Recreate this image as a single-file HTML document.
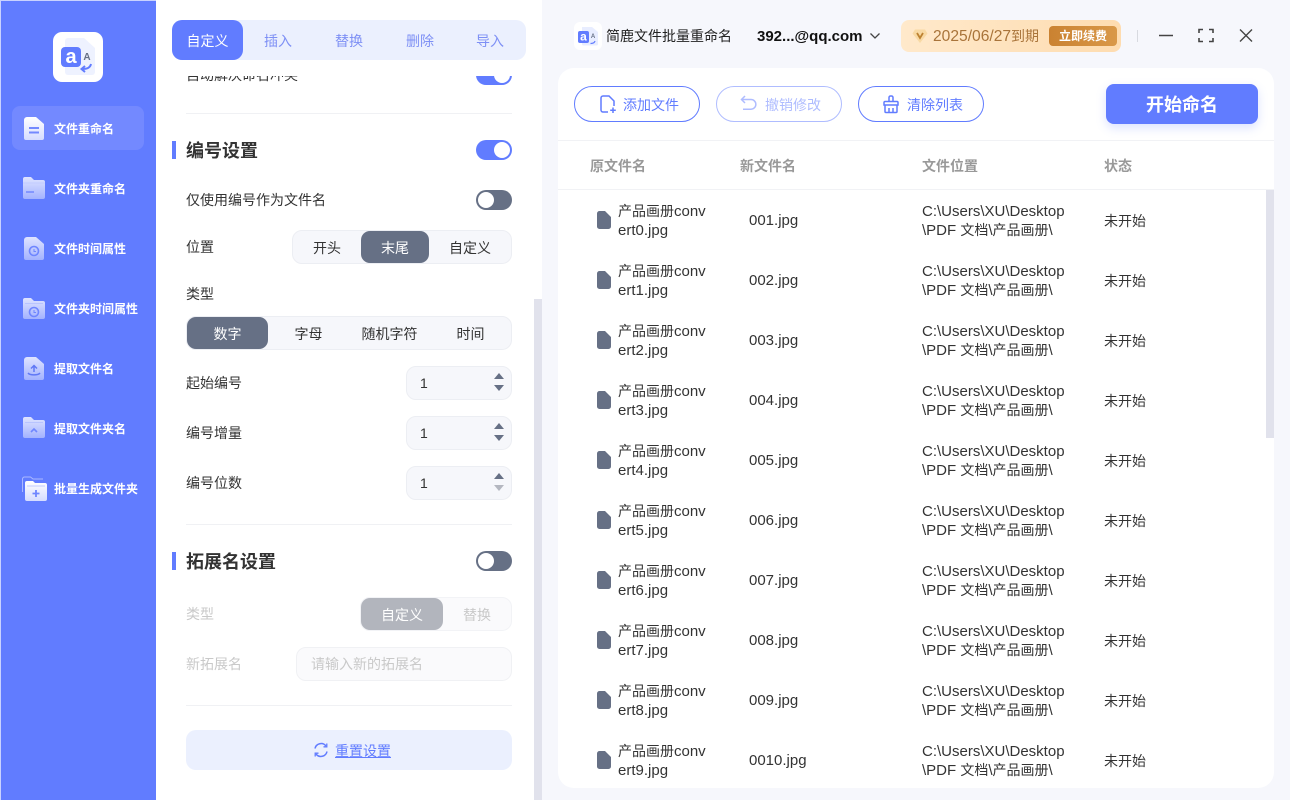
<!DOCTYPE html>
<html lang="zh"><head><meta charset="utf-8"><title>简鹿文件批量重命名</title>
<style>
*{box-sizing:border-box}
html,body{margin:0;padding:0}
body{width:1290px;height:800px;position:relative;overflow:hidden;background:#f6f7fc;font-family:"Liberation Sans","Noto Sans CJK SC",sans-serif;font-size:14px;color:#333}
.a{position:absolute}
.t{position:absolute;white-space:nowrap;line-height:20px}
svg{position:absolute;display:block}
.nav{position:absolute;left:54px;color:#fff;font-size:12px;font-weight:700;line-height:20px;white-space:nowrap}
.tog{position:absolute;width:36px;height:20px;border-radius:10px;background:#667085}
.tog i{position:absolute;top:2px;left:2px;width:16px;height:16px;border-radius:50%;background:#fff}
.tog.on{background:#617cff}.tog.on i{left:18px}
.seg{position:absolute;height:34px;border:1px solid #eceef3;border-radius:10px;background:#f6f7fb}
.sel{position:absolute;background:#667085;border-radius:9px;color:#fff;text-align:center;line-height:34px;height:32px;top:0}
.opt{position:absolute;top:0;text-align:center;line-height:34px;height:32px;color:#333;font-size:14px}
.spin{position:absolute;left:406px;width:106px;height:34px;border:1px solid #eceef3;border-radius:10px;background:#f6f7fb;line-height:32px;padding-left:13px;font-size:14px}
.spin b,.spin u{position:absolute;left:87px;width:0;height:0;border-left:5px solid transparent;border-right:5px solid transparent}
.spin b{top:6px;border-bottom:6px solid #667085}
.spin u{top:18px;border-top:6px solid #667085}
.hr{position:absolute;left:186px;width:326px;height:1px;background:#f0f1f4}
.btn{position:absolute;top:86px;height:36px;width:126px;border:1px solid #617cff;border-radius:18px;color:#617cff;line-height:36px;padding-left:48px}
.hd{position:absolute;top:156px;color:#999;font-weight:700;font-size:14px;line-height:20px}
.c{position:absolute;font-size:14px;line-height:19px;color:#333;white-space:nowrap}
.c span{font-size:15px}
</style></head><body>

<!-- sidebar -->
<div class="a" style="left:0;top:0;width:156px;height:800px;background:#617cff;border-left:1px solid #c9d2ff;border-top:1px solid #c9d2ff"></div>
<div class="a" style="left:53px;top:32px;width:50px;height:50px;border-radius:9px;background:#fff"></div>
<svg style="left:53px;top:32px" width="50" height="50" viewBox="0 0 50 50"><path d="M12 9a3 3 0 0 1 3-3h16l11 10v24a3 3 0 0 1-3 3H15a3 3 0 0 1-3-3z" fill="#eef2ff"/><rect x="8" y="15" width="20" height="20" rx="4" fill="#617cff"/><text x="18" y="31" font-size="20" font-weight="700" fill="#fff" text-anchor="middle" font-family="Liberation Sans">a</text><text x="34" y="28" font-size="10" font-weight="700" fill="#667085" text-anchor="middle" font-family="Liberation Sans">A</text><path d="M38 32c-1 4-4 5-9 5m3-3-3.500 3 3.500 3" fill="none" stroke="#617cff" stroke-width="2"/></svg>
<div class="a" style="left:12px;top:106px;width:132px;height:44px;border-radius:8px;background:#7389ff"></div>

<svg style="left:24px;top:117px" width="20" height="23" viewBox="0 0 20 23"><defs><linearGradient id="w" x1="0" y1="0" x2="0" y2="1"><stop offset="0" stop-color="#fff"/><stop offset="1" stop-color="#d5dcff"/></linearGradient><linearGradient id="p" x1="0" y1="0" x2="0" y2="1"><stop offset="0" stop-color="#dfe4ff"/><stop offset="1" stop-color="#a3b2ff"/></linearGradient></defs><path d="M0 3a3 3 0 0 1 3-3h9l8 7v14a2 2 0 0 1-2 2H2a2 2 0 0 1-2-2z" fill="url(#w)"/><path d="M5 11h10M5 15.500h10" stroke="#7389ff" stroke-width="2"/></svg>
<div class="nav" style="top:119px">文件重命名</div>

<svg style="left:23px;top:177px" width="22" height="22" viewBox="0 0 22 22"><path d="M0 2a2 2 0 0 1 2-2h6l3 3h9a2 2 0 0 1 2 2v15a2 2 0 0 1-2 2H2a2 2 0 0 1-2-2z" fill="url(#p)"/><path d="M0 6h22" stroke="#c2ccff"/><path d="M3 15h8" stroke="#7389ff" stroke-width="1.500"/></svg>
<div class="nav" style="top:179px">文件夹重命名</div>

<svg style="left:24px;top:237px" width="20" height="23" viewBox="0 0 20 23"><path d="M0 3a3 3 0 0 1 3-3h9l8 7v14a2 2 0 0 1-2 2H2a2 2 0 0 1-2-2z" fill="url(#p)"/><circle cx="10" cy="14" r="4.500" fill="none" stroke="#6f86ff" stroke-width="1.600"/><path d="M10 12v2.500h2" fill="none" stroke="#6f86ff"/></svg>
<div class="nav" style="top:239px">文件时间属性</div>

<svg style="left:23px;top:298px" width="22" height="21" viewBox="0 0 22 21"><path d="M0 2a2 2 0 0 1 2-2h6l3 3h9a2 2 0 0 1 2 2v14a2 2 0 0 1-2 2H2a2 2 0 0 1-2-2z" fill="url(#p)"/><path d="M2 5.500h18" stroke="#b8c4ff"/><circle cx="11" cy="14" r="4.500" fill="none" stroke="#6f86ff" stroke-width="1.600"/><path d="M11 12v2.500h2" fill="none" stroke="#6f86ff"/></svg>
<div class="nav" style="top:299px">文件夹时间属性</div>

<svg style="left:24px;top:357px" width="20" height="23" viewBox="0 0 20 23"><path d="M0 3a3 3 0 0 1 3-3h9l8 7v14a2 2 0 0 1-2 2H2a2 2 0 0 1-2-2z" fill="url(#p)"/><path d="M10 15V9M7 11.500l3-3 3 3M4 16c2 2.500 10 2.500 12 0" fill="none" stroke="#6078f5" stroke-width="1.500"/></svg>
<div class="nav" style="top:359px">提取文件名</div>

<svg style="left:23px;top:417px" width="22" height="21" viewBox="0 0 22 21"><path d="M0 2a2 2 0 0 1 2-2h6l3 3h9a2 2 0 0 1 2 2v14a2 2 0 0 1-2 2H2a2 2 0 0 1-2-2z" fill="url(#p)"/><path d="M2 5.500h18" stroke="#b8c4ff"/><path d="M8 15l3-3 3 3" fill="none" stroke="#6f86ff" stroke-width="1.600"/></svg>
<div class="nav" style="top:419px">提取文件夹名</div>

<svg style="left:22px;top:476px" width="26" height="26" viewBox="0 0 26 26"><path d="M.5 16V3a2 2 0 0 1 2-2h6l2.500 2h10" fill="none" stroke="#aab8ff"/><path d="M3 7a2 2 0 0 1 2-2h6l2 2h10a2 2 0 0 1 2 2v14a2 2 0 0 1-2 2H5a2 2 0 0 1-2-2z" fill="url(#w)"/><path d="M5 10h18" stroke="#c2ccff"/><path d="M14 14v7M10.500 17.500h7" stroke="#6f86ff" stroke-width="1.800"/></svg>
<div class="nav" style="top:479px">批量生成文件夹</div>

<!-- settings panel -->
<div class="a" style="left:156px;top:0;width:386px;height:800px;background:#fff"></div>
<div class="a" style="left:534px;top:299px;width:8px;height:501px;background:#e1e2ec"></div>

<div class="t" style="left:186px;top:65px;height:20px;font-size:14px;color:#333">自动解决命名冲突</div>
<div class="tog on" style="left:476px;top:65px"><i></i></div>

<div class="a" style="left:156px;top:0;width:378px;height:76px;background:#fff"></div>
<div class="a" style="left:172px;top:20px;width:354px;height:40px;border-radius:10px;background:#ebf0fe"></div>
<div class="a" style="left:172px;top:20px;width:71px;height:40px;border-radius:10px;background:#617cff;color:#fff;text-align:center;line-height:43px;font-size:14px">自定义</div>
<div class="t" style="left:264px;top:31px;color:#7e90f5">插入</div>
<div class="t" style="left:335px;top:31px;color:#7e90f5">替换</div>
<div class="t" style="left:406px;top:31px;color:#7e90f5">删除</div>
<div class="t" style="left:476px;top:31px;color:#7e90f5">导入</div>

<div class="hr" style="top:113px"></div>
<div class="a" style="left:172px;top:141px;width:4px;height:18px;background:#617cff"></div>
<div class="t" style="left:186px;top:140px;font-size:18px;font-weight:700;line-height:22px">编号设置</div>
<div class="tog on" style="left:476px;top:140px"><i></i></div>

<div class="t" style="left:186px;top:190px">仅使用编号作为文件名</div>
<div class="tog" style="left:476px;top:190px"><i></i></div>

<div class="t" style="left:186px;top:237px">位置</div>
<div class="seg" style="left:292px;top:230px;width:220px">
  <div class="opt" style="left:0;width:68px">开头</div>
  <div class="sel" style="left:68px;width:68px">末尾</div>
  <div class="opt" style="left:136px;width:82px">自定义</div>
</div>

<div class="t" style="left:186px;top:284px">类型</div>
<div class="seg" style="left:186px;top:316px;width:326px">
  <div class="sel" style="left:0;width:81px">数字</div>
  <div class="opt" style="left:81px;width:81px">字母</div>
  <div class="opt" style="left:162px;width:81px">随机字符</div>
  <div class="opt" style="left:243px;width:81px">时间</div>
</div>

<div class="t" style="left:186px;top:373px">起始编号</div>
<div class="spin" style="top:366px">1<b></b><u></u></div>
<div class="t" style="left:186px;top:423px">编号增量</div>
<div class="spin" style="top:416px">1<b></b><u></u></div>
<div class="t" style="left:186px;top:473px">编号位数</div>
<div class="spin" style="top:466px">1<b></b><u style="border-top-color:#b4b7c0"></u></div>

<div class="hr" style="top:524px"></div>
<div class="a" style="left:172px;top:552px;width:4px;height:18px;background:#617cff"></div>
<div class="t" style="left:186px;top:551px;font-size:18px;font-weight:700;line-height:22px">拓展名设置</div>
<div class="tog" style="left:476px;top:551px"><i></i></div>

<div class="t" style="left:186px;top:604px;color:#c9c9c9">类型</div>
<div class="seg" style="left:360px;top:597px;width:152px;background:#fafafc;border-color:#f2f3f6">
  <div class="sel" style="left:0;width:82px;background:#b2b5bd">自定义</div>
  <div class="opt" style="left:82px;width:68px;color:#c9c9c9">替换</div>
</div>
<div class="t" style="left:186px;top:654px;color:#c9c9c9">新拓展名</div>
<div class="a" style="left:296px;top:647px;width:216px;height:34px;border:1px solid #f0f1f4;border-radius:10px;background:#fafafc;line-height:32px;padding-left:14px;color:#c9c9c9">请输入新的拓展名</div>

<div class="hr" style="top:705px"></div>
<div class="a" style="left:186px;top:730px;width:326px;height:40px;border-radius:10px;background:#ebf0fe"></div>
<svg style="left:313px;top:742px" width="16" height="16" viewBox="0 0 16 16"><path d="M2 6.500A6.200 6.200 0 0 1 13 4M14 9.500A6.200 6.200 0 0 1 3 12" fill="none" stroke="#617cff" stroke-width="1.500"/><path d="M13.800 1.500v3.300h-3.300M2.200 14.500v-3.300h3.300" fill="none" stroke="#617cff" stroke-width="1.300"/></svg>
<div class="t" style="left:335px;top:741px;color:#617cff;text-decoration:underline">重置设置</div>

<!-- title bar -->
<div class="a" style="left:574px;top:22px;width:28px;height:28px;border-radius:6px;background:#fff"></div>
<svg style="left:574px;top:22px" width="28" height="28" viewBox="0 0 28 28"><path d="M8 5h10l6 5v12a1.500 1.500 0 0 1-1.500 1.500h-13A1.500 1.500 0 0 1 8 22z" fill="#e8edff"/><rect x="4" y="9" width="11" height="12" rx="2" fill="#617cff"/><text x="9.500" y="18.500" font-size="12" font-weight="700" fill="#fff" text-anchor="middle" font-family="Liberation Sans">a</text><text x="19" y="16" font-size="6" font-weight="700" fill="#667085" text-anchor="middle" font-family="Liberation Sans">A</text><path d="M21 19c-.5 2-2 2.500-4.500 2.500" fill="none" stroke="#617cff" stroke-width="1.200"/></svg>
<div class="t" style="left:606px;top:26px;color:#222;font-size:14px">简鹿文件批量重命名</div>
<div class="t" style="left:757px;top:26.500px;color:#111;font-weight:700;font-size:15px">392...@qq.com</div>
<svg style="left:869px;top:31px" width="12" height="10" viewBox="0 0 12 10"><path d="M1.500 2.500L6 7l4.500-4.500" fill="none" stroke="#444" stroke-width="1.300"/></svg>

<div class="a" style="left:901px;top:20px;width:220px;height:32px;border-radius:8px;background:linear-gradient(90deg,#ffe9cb,#fedcb0)"></div>
<svg style="left:912px;top:28px" width="16" height="16" viewBox="0 0 16 16"><path d="M3 1.500h10l2.500 4L8 15 .5 5.500z" fill="#f8d9a4"/><path d="M5 5l3 5 3-5" fill="none" stroke="#bd8232" stroke-width="1.800"/></svg>
<div class="t" style="left:933px;top:26px;color:#a9743a;font-size:14px"><span style="font-size:15.600px">2025/06/27</span>到期</div>
<div class="a" style="left:1049px;top:26px;width:68px;height:20px;border-radius:4px;background:linear-gradient(90deg,#ca8231,#d99848);color:#fff;font-size:12px;font-weight:700;line-height:21px;text-align:center">立即续费</div>
<div class="a" style="left:1137px;top:30px;width:1px;height:12px;background:#d8dae0"></div>
<svg style="left:1158px;top:27px" width="100" height="18" viewBox="0 0 100 18"><path d="M1 8.500h14" stroke="#444" stroke-width="1.500"/><path d="M41 6V2.500h4M51 2.500h4V6M55 11v3.500h-4M45 14.500h-4V11" fill="none" stroke="#444" stroke-width="1.600"/><path d="M82 2.500l12 12M94 2.500l-12 12" stroke="#444" stroke-width="1.400"/></svg>

<!-- card -->
<div class="a" style="left:558px;top:68px;width:716px;height:720px;border-radius:16px;background:#fff"></div>

<div class="btn" style="left:574px">添加文件</div>
<svg style="left:599px;top:95px" width="18" height="19" viewBox="0 0 18 19"><path d="M9 17H4a2 2 0 0 1-2-2V3a2 2 0 0 1 2-2h6l5 5v5" fill="none" stroke="#617cff" stroke-width="1.500"/><path d="M14 12.500v5.500M11.200 15.300h5.600" stroke="#617cff" stroke-width="1.500"/></svg>
<div class="btn" style="left:716px;opacity:.5">撤销修改</div>
<svg style="left:740px;top:95px;opacity:.5" width="18" height="18" viewBox="0 0 18 18"><path d="M5 1L1.500 4.500 5 8M2 4.500h9a4.800 4.800 0 0 1 0 9.700H3" fill="none" stroke="#617cff" stroke-width="1.500"/></svg>
<div class="btn" style="left:858px;color:#617cff">清除列表</div>
<svg style="left:882px;top:95px" width="18" height="19" viewBox="0 0 18 19"><path d="M7 6V2.500a1.500 1.500 0 0 1 1.500-1.500h1A1.500 1.500 0 0 1 11 2.500V6M3 6.500h12a1 1 0 0 1 1 1V10H2V7.500a1 1 0 0 1 1-1zM3 10v6.500a1 1 0 0 0 1 1h10a1 1 0 0 0 1-1V10M7 13v4.500M11 13v4.500" fill="none" stroke="#617cff" stroke-width="1.500"/></svg>
<div class="a" style="left:1106px;top:84px;width:152px;height:40px;border-radius:8px;background:#617cff;color:#fff;font-size:18px;font-weight:700;text-align:center;line-height:43px;box-shadow:0 4px 10px rgba(97,124,255,.22)">开始命名</div>

<div class="a" style="left:558px;top:140px;width:716px;height:1px;background:#f1f2f5"></div>
<div class="hd" style="left:590px">原文件名</div>
<div class="hd" style="left:740px">新文件名</div>
<div class="hd" style="left:922px">文件位置</div>
<div class="hd" style="left:1104px">状态</div>
<div class="a" style="left:558px;top:189px;width:716px;height:1px;background:#f1f2f5"></div>
<div class="a" style="left:1266px;top:190px;width:8px;height:248px;background:#e1e2ec"></div>

<!-- rows -->
<svg style="left:597px;top:211px" width="14" height="18" viewBox="0 0 14 18"><path d="M0 2.500A2.500 2.500 0 0 1 2.500 0H8l6 6v9.500a2.500 2.500 0 0 1-2.500 2.500h-9A2.500 2.500 0 0 1 0 15.500z" fill="#667085"/></svg>
<div class="c" style="left:618px;top:202px">产品画册<span>conv<br>ert0.jpg</span></div><div class="c" style="left:749px;top:211px"><span>001.jpg</span></div><div class="c" style="left:922px;top:202px"><span>C:\Users\XU\Desktop<br>\PDF </span>文档<span>\</span>产品画册<span>\</span></div><div class="c" style="left:1104px;top:212px">未开始</div>

<svg style="left:597px;top:271px" width="14" height="18" viewBox="0 0 14 18"><path d="M0 2.500A2.500 2.500 0 0 1 2.500 0H8l6 6v9.500a2.500 2.500 0 0 1-2.500 2.500h-9A2.500 2.500 0 0 1 0 15.500z" fill="#667085"/></svg>
<div class="c" style="left:618px;top:262px">产品画册<span>conv<br>ert1.jpg</span></div><div class="c" style="left:749px;top:271px"><span>002.jpg</span></div><div class="c" style="left:922px;top:262px"><span>C:\Users\XU\Desktop<br>\PDF </span>文档<span>\</span>产品画册<span>\</span></div><div class="c" style="left:1104px;top:272px">未开始</div>

<svg style="left:597px;top:331px" width="14" height="18" viewBox="0 0 14 18"><path d="M0 2.500A2.500 2.500 0 0 1 2.500 0H8l6 6v9.500a2.500 2.500 0 0 1-2.500 2.500h-9A2.500 2.500 0 0 1 0 15.500z" fill="#667085"/></svg>
<div class="c" style="left:618px;top:322px">产品画册<span>conv<br>ert2.jpg</span></div><div class="c" style="left:749px;top:331px"><span>003.jpg</span></div><div class="c" style="left:922px;top:322px"><span>C:\Users\XU\Desktop<br>\PDF </span>文档<span>\</span>产品画册<span>\</span></div><div class="c" style="left:1104px;top:332px">未开始</div>

<svg style="left:597px;top:391px" width="14" height="18" viewBox="0 0 14 18"><path d="M0 2.500A2.500 2.500 0 0 1 2.500 0H8l6 6v9.500a2.500 2.500 0 0 1-2.500 2.500h-9A2.500 2.500 0 0 1 0 15.500z" fill="#667085"/></svg>
<div class="c" style="left:618px;top:382px">产品画册<span>conv<br>ert3.jpg</span></div><div class="c" style="left:749px;top:391px"><span>004.jpg</span></div><div class="c" style="left:922px;top:382px"><span>C:\Users\XU\Desktop<br>\PDF </span>文档<span>\</span>产品画册<span>\</span></div><div class="c" style="left:1104px;top:392px">未开始</div>

<svg style="left:597px;top:451px" width="14" height="18" viewBox="0 0 14 18"><path d="M0 2.500A2.500 2.500 0 0 1 2.500 0H8l6 6v9.500a2.500 2.500 0 0 1-2.500 2.500h-9A2.500 2.500 0 0 1 0 15.500z" fill="#667085"/></svg>
<div class="c" style="left:618px;top:442px">产品画册<span>conv<br>ert4.jpg</span></div><div class="c" style="left:749px;top:451px"><span>005.jpg</span></div><div class="c" style="left:922px;top:442px"><span>C:\Users\XU\Desktop<br>\PDF </span>文档<span>\</span>产品画册<span>\</span></div><div class="c" style="left:1104px;top:452px">未开始</div>

<svg style="left:597px;top:511px" width="14" height="18" viewBox="0 0 14 18"><path d="M0 2.500A2.500 2.500 0 0 1 2.500 0H8l6 6v9.500a2.500 2.500 0 0 1-2.500 2.500h-9A2.500 2.500 0 0 1 0 15.500z" fill="#667085"/></svg>
<div class="c" style="left:618px;top:502px">产品画册<span>conv<br>ert5.jpg</span></div><div class="c" style="left:749px;top:511px"><span>006.jpg</span></div><div class="c" style="left:922px;top:502px"><span>C:\Users\XU\Desktop<br>\PDF </span>文档<span>\</span>产品画册<span>\</span></div><div class="c" style="left:1104px;top:512px">未开始</div>

<svg style="left:597px;top:571px" width="14" height="18" viewBox="0 0 14 18"><path d="M0 2.500A2.500 2.500 0 0 1 2.500 0H8l6 6v9.500a2.500 2.500 0 0 1-2.500 2.500h-9A2.500 2.500 0 0 1 0 15.500z" fill="#667085"/></svg>
<div class="c" style="left:618px;top:562px">产品画册<span>conv<br>ert6.jpg</span></div><div class="c" style="left:749px;top:571px"><span>007.jpg</span></div><div class="c" style="left:922px;top:562px"><span>C:\Users\XU\Desktop<br>\PDF </span>文档<span>\</span>产品画册<span>\</span></div><div class="c" style="left:1104px;top:572px">未开始</div>

<svg style="left:597px;top:631px" width="14" height="18" viewBox="0 0 14 18"><path d="M0 2.500A2.500 2.500 0 0 1 2.500 0H8l6 6v9.500a2.500 2.500 0 0 1-2.500 2.500h-9A2.500 2.500 0 0 1 0 15.500z" fill="#667085"/></svg>
<div class="c" style="left:618px;top:622px">产品画册<span>conv<br>ert7.jpg</span></div><div class="c" style="left:749px;top:631px"><span>008.jpg</span></div><div class="c" style="left:922px;top:622px"><span>C:\Users\XU\Desktop<br>\PDF </span>文档<span>\</span>产品画册<span>\</span></div><div class="c" style="left:1104px;top:632px">未开始</div>

<svg style="left:597px;top:691px" width="14" height="18" viewBox="0 0 14 18"><path d="M0 2.500A2.500 2.500 0 0 1 2.500 0H8l6 6v9.500a2.500 2.500 0 0 1-2.500 2.500h-9A2.500 2.500 0 0 1 0 15.500z" fill="#667085"/></svg>
<div class="c" style="left:618px;top:682px">产品画册<span>conv<br>ert8.jpg</span></div><div class="c" style="left:749px;top:691px"><span>009.jpg</span></div><div class="c" style="left:922px;top:682px"><span>C:\Users\XU\Desktop<br>\PDF </span>文档<span>\</span>产品画册<span>\</span></div><div class="c" style="left:1104px;top:692px">未开始</div>

<svg style="left:597px;top:751px" width="14" height="18" viewBox="0 0 14 18"><path d="M0 2.500A2.500 2.500 0 0 1 2.500 0H8l6 6v9.500a2.500 2.500 0 0 1-2.500 2.500h-9A2.500 2.500 0 0 1 0 15.500z" fill="#667085"/></svg>
<div class="c" style="left:618px;top:742px">产品画册<span>conv<br>ert9.jpg</span></div><div class="c" style="left:749px;top:751px"><span>0010.jpg</span></div><div class="c" style="left:922px;top:742px"><span>C:\Users\XU\Desktop<br>\PDF </span>文档<span>\</span>产品画册<span>\</span></div><div class="c" style="left:1104px;top:752px">未开始</div>

</body></html>
